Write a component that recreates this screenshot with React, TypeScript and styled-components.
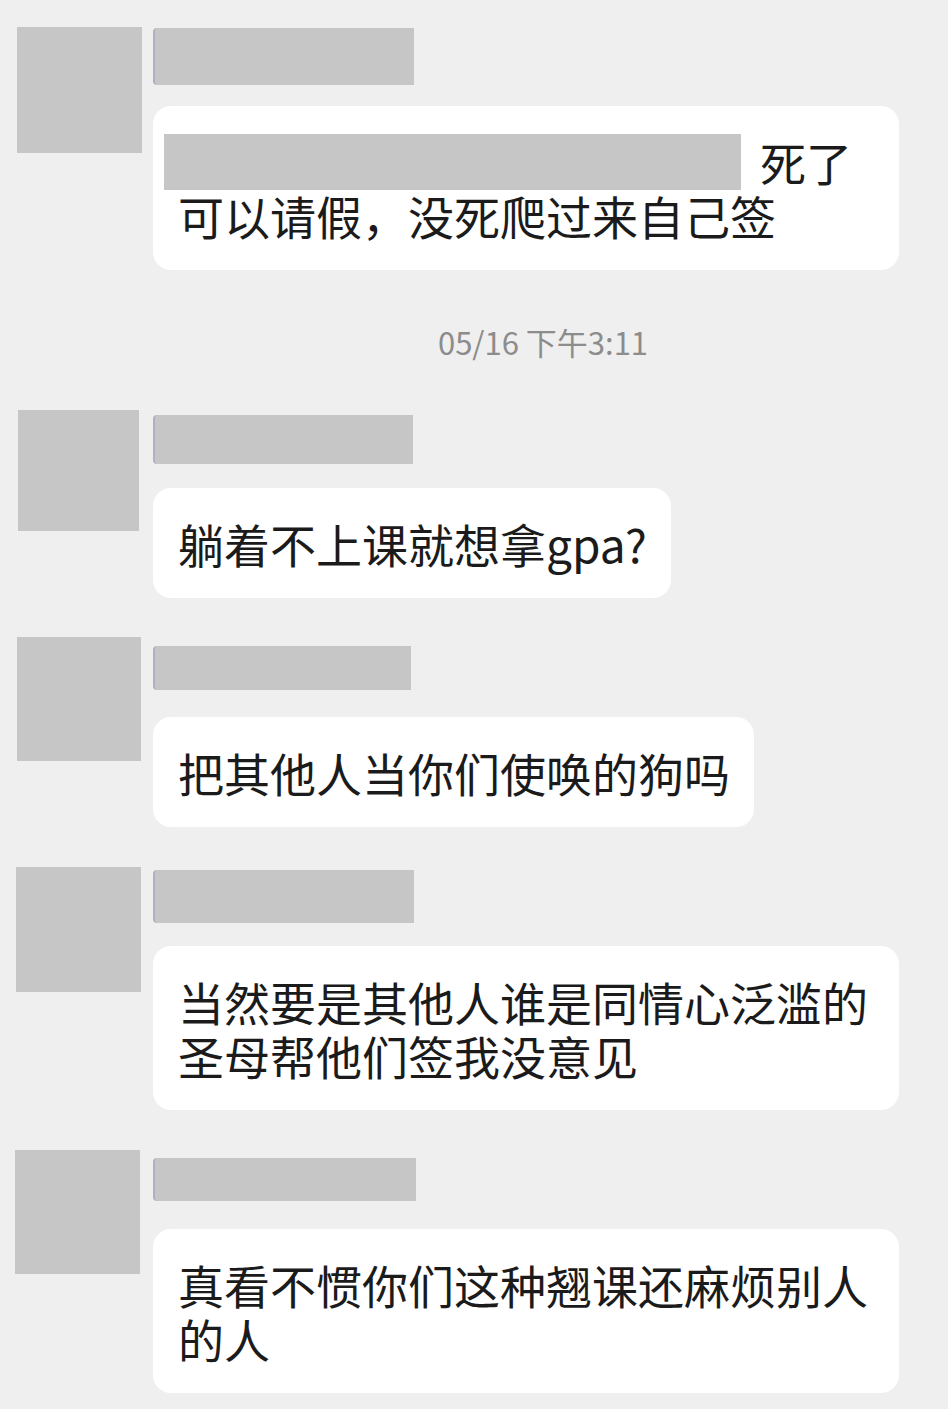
import React from "react";
import styled, { createGlobalStyle } from "styled-components";

const GlobalStyle = createGlobalStyle`
  html, body {
    margin: 0;
    padding: 0;
    background: #efefef;
  }
  body {
    font-family: "Noto Sans CJK SC", "Noto Sans", sans-serif;
    -webkit-font-smoothing: antialiased;
  }
`;

const Page = styled.div`
  width: 948px;
  min-height: 1409px;
  box-sizing: border-box;
  padding-top: 27px;
  display: flex;
  flex-direction: column;
  background: #efefef;
`;

const Row = styled.div<{ $mt: number }>`
  display: grid;
  grid-template-columns: 153px 1fr;
  align-items: start;
  margin-top: ${(p) => p.$mt}px;
`;

const Avatar = styled.div<{ $left: number; $w: number; $h: number; $top: number }>`
  margin-left: ${(p) => p.$left}px;
  margin-top: ${(p) => p.$top}px;
  width: ${(p) => p.$w}px;
  height: ${(p) => p.$h}px;
  background: #c6c6c6;
`;

const Column = styled.div`
  display: flex;
  flex-direction: column;
  align-items: flex-start;
`;

const NameBar = styled.div<{ $top: number; $w: number; $h: number; $gap: number }>`
  margin-top: ${(p) => p.$top}px;
  margin-bottom: ${(p) => p.$gap}px;
  width: ${(p) => p.$w}px;
  height: ${(p) => p.$h}px;
  background: #c6c6c6;
  box-sizing: border-box;
  border-left: 2px solid #adb1c2;
  border-radius: 4px 0 0 4px;
`;

const Bubble = styled.div<{ $wide?: boolean }>`
  position: relative;
  box-sizing: border-box;
  max-width: 746px;
  width: ${(p) => (p.$wide ? "746px" : "auto")};
  padding: 28px 24px 28px 25px;
  background: #ffffff;
  border-radius: 18px;
  font-size: 46px;
  line-height: 54px;
  color: #1b1b1b;
  word-break: break-all;
`;

const Spacer = styled.span<{ $w: number }>`
  display: inline-block;
  width: ${(p) => p.$w}px;
  height: 0;
`;

const Redaction = styled.div`
  position: absolute;
  left: 11px;
  top: 28px;
  width: 577px;
  height: 56px;
  background: #c6c6c6;
`;

const Timestamp = styled.div`
  margin-top: 52px;
  height: 40px;
  line-height: 40px;
  text-align: center;
  padding-left: 138px;
  font-size: 31px;
  color: #8c8c8c;
  font-family: "Noto Sans CJK SC", "Noto Sans", sans-serif;
`;

type Msg = {
  avatar: { left: number; top: number; w: number; h: number };
  name: { top: number; w: number; h: number; gap: number };
  mt: number;
  content: React.ReactNode;
};

const messages: Msg[] = [
  {
    avatar: { left: 18, top: 0, w: 121, h: 121 },
    name: { top: 5, w: 260, h: 49, gap: 24 },
    mt: 48,
    content: "躺着不上课就想拿gpa?",
  },
  {
    avatar: { left: 17, top: 0, w: 124, h: 124 },
    name: { top: 9, w: 258, h: 44, gap: 27 },
    mt: 39,
    content: "把其他人当你们使唤的狗吗",
  },
  {
    avatar: { left: 16, top: 0, w: 125, h: 125 },
    name: { top: 3, w: 261, h: 53, gap: 23 },
    mt: 40,
    content: "当然要是其他人谁是同情心泛滥的圣母帮他们签我没意见",
  },
  {
    avatar: { left: 15, top: 0, w: 125, h: 124 },
    name: { top: 8, w: 263, h: 43, gap: 28 },
    mt: 40,
    content: "真看不惯你们这种翘课还麻烦别人的人",
  },
];

function Message({ m }: { m: Msg }) {
  return (
    <Row $mt={m.mt}>
      <Avatar $left={m.avatar.left} $top={m.avatar.top} $w={m.avatar.w} $h={m.avatar.h} />
      <Column>
        <NameBar $top={m.name.top} $w={m.name.w} $h={m.name.h} $gap={m.name.gap} />
        <Bubble>{m.content}</Bubble>
      </Column>
    </Row>
  );
}

export default function App() {
  return (
    <>
      <GlobalStyle />
      <Page>
        <Row $mt={0}>
          <Avatar $left={17} $top={0} $w={125} $h={126} />
          <Column>
            <NameBar $top={1} $w={261} $h={57} $gap={21} />
            <Bubble $wide>
              <Spacer $w={582} />
              死了
              <br />
              可以请假，没死爬过来自己签
              <Redaction />
            </Bubble>
          </Column>
        </Row>
        <Timestamp>05/16 下午3:11</Timestamp>
        {messages.map((m, i) => (
          <Message key={i} m={m} />
        ))}
      </Page>
    </>
  );
}
